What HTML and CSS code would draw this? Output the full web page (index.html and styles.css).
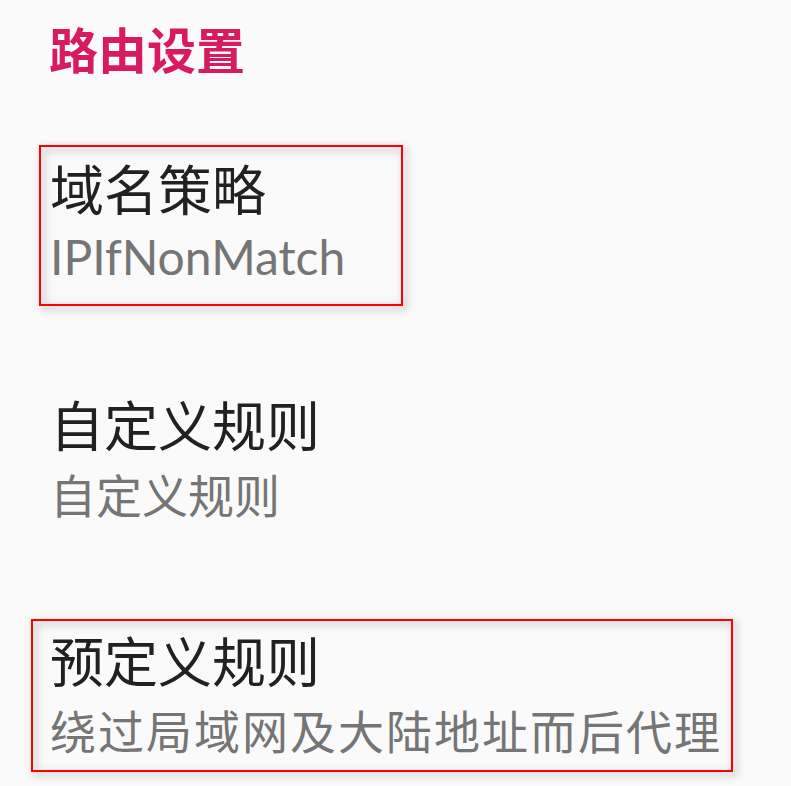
FILE: index.html
```html
<!DOCTYPE html>
<html>
<head>
  <meta charset="utf-8">
  <title>路由设置</title>
  <link rel="stylesheet" href="styles.css">
</head>
<body>
  <h1 class="section-title">路由设置</h1>

  <div class="pref-list">
    <div class="pref">
      <div class="pref-title">域名策略</div>
      <div class="pref-summary latin">IPIfNonMatch</div>
      <div class="frame frame-domain"></div>
    </div>

    <div class="pref">
      <div class="pref-title">自定义规则</div>
      <div class="pref-summary">自定义规则</div>
    </div>

    <div class="pref">
      <div class="pref-title">预定义规则</div>
      <div class="pref-summary wide">绕过局域网及大陆地址而后代理</div>
      <div class="frame frame-preset"></div>
    </div>
  </div>
</body>
</html>
```

FILE: styles.css
```css
body {
  margin: 0;
  background-color: #fafafa;
  font-family: "Noto Sans CJK SC", "Noto Sans", sans-serif;
}

.section-title {
  margin: 0;
  height: 126px;
  box-sizing: border-box;
  padding: 18px 0 0 49px;
  font-size: 49px;
  line-height: 60px;
  font-weight: bold;
  color: #d81b60; /* accent pink */
}

.pref {
  position: relative;
  height: 236px;
  box-sizing: border-box;
  padding: 30px 0 0 50px;
}

.pref:last-child {
  height: 188px;
}

.pref-title {
  font-size: 54px;
  line-height: 64px;
  color: #212121;
}

.pref-summary {
  margin-top: 7px;
  font-size: 46px;
  line-height: 60px;
  color: #757575;
}

.pref-summary.latin {
  font-family: Lato, "Noto Sans", sans-serif;
  font-size: 48px;
}

.pref-summary.wide {
  letter-spacing: 2px;
}

/* red highlight frames laid over the rows */
.frame {
  position: absolute;
  border: 2px solid #ff0000;
  box-sizing: border-box;
  filter: drop-shadow(3px 3px 4px rgba(0, 0, 0, 0.4));
}

.frame-domain {
  left: 39px;
  top: 19px;
  width: 364px;
  height: 161px;
}

.frame-preset {
  left: 31px;
  top: 21px;
  width: 702px;
  height: 153px;
}
```
